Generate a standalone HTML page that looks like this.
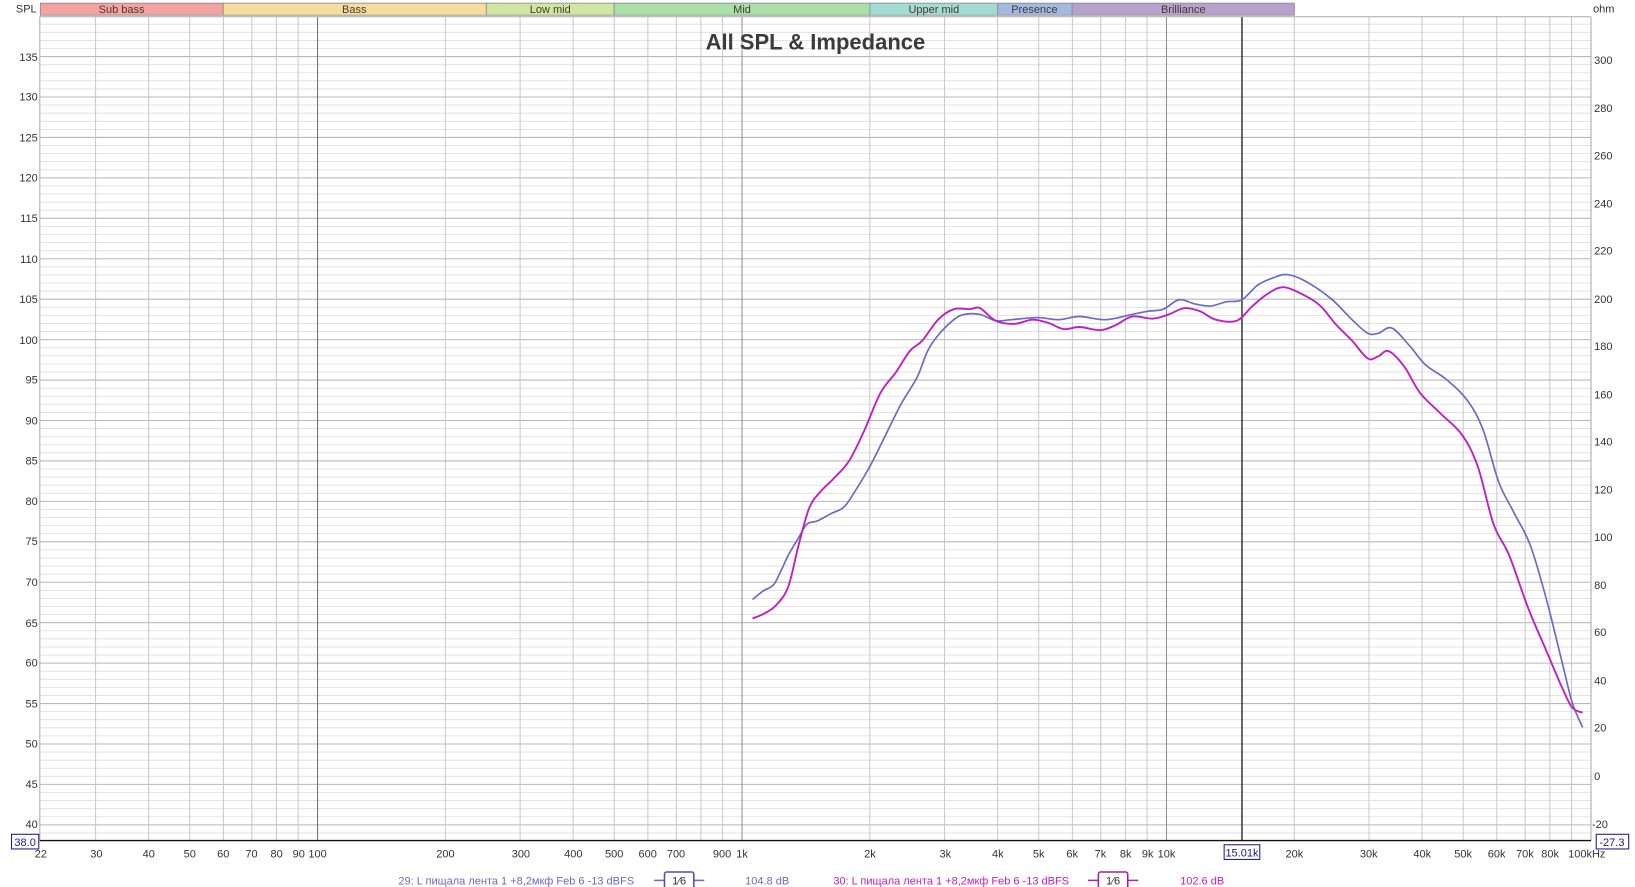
<!DOCTYPE html>
<html><head><meta charset="utf-8"><style>
html,body{margin:0;padding:0;background:#fff;overflow:hidden}
svg{display:block}
text{font-family:"Liberation Sans","DejaVu Sans",sans-serif}
</style></head><body>
<svg id="s" width="1635" height="887" viewBox="0 0 1560 846.3" preserveAspectRatio="none" xmlns="http://www.w3.org/2000/svg">
<rect width="1560" height="847" fill="#fff"/>
<g id="grid"></g>
<!-- bands -->
<g stroke="#8a8a8a" stroke-width="0.8" font-size="10.5" text-anchor="middle" fill="#444">
<rect x="38.5" y="3" width="174.5" height="11.5" fill="#f4a3a3"/>
<rect x="213" y="3" width="251" height="11.5" fill="#f6dd9e"/>
<rect x="464" y="3" width="122" height="11.5" fill="#cfe7a2"/>
<rect x="586" y="3" width="244" height="11.5" fill="#a8e0a8"/>
<rect x="830" y="3" width="122" height="11.5" fill="#a2dcd2"/>
<rect x="952" y="3" width="71" height="11.5" fill="#a3b9e2"/>
<rect x="1023" y="3" width="212" height="11.5" fill="#b6a2cc"/>
</g>
<g font-size="10.5" text-anchor="middle" fill="#4a3a30">
<text x="116" y="12.5">Sub bass</text><text x="338" y="12.5">Bass</text><text x="525" y="12.5">Low mid</text>
<text x="708" y="12.5">Mid</text><text x="891" y="12.5">Upper mid</text><text x="987" y="12.5">Presence</text><text x="1129" y="12.5">Brilliance</text>
</g>
<text x="35" y="12" font-size="10.5" text-anchor="end" fill="#333">SPL</text>
<text x="1520" y="12" font-size="10.5" fill="#333">ohm</text>
<text x="778" y="47" font-size="21" font-weight="bold" text-anchor="middle" fill="#3a3a3a">All SPL &amp; Impedance</text>
<!-- left labels -->
<g font-size="10.5" text-anchor="end" fill="#333">
<text x="36" y="58">135</text><text x="36" y="96">130</text><text x="36" y="135">125</text><text x="36" y="173">120</text>
<text x="36" y="212">115</text><text x="36" y="251">110</text><text x="36" y="289">105</text><text x="36" y="328">100</text>
<text x="36" y="366">95</text><text x="36" y="405">90</text><text x="36" y="443">85</text><text x="36" y="482">80</text>
<text x="36" y="520">75</text><text x="36" y="559">70</text><text x="36" y="598">65</text><text x="36" y="636">60</text>
<text x="36" y="675">55</text><text x="36" y="713">50</text><text x="36" y="752">45</text><text x="36" y="790">40</text>
</g>
<g font-size="10.5" fill="#333">
<text x="1521" y="61">300</text><text x="1521" y="107">280</text><text x="1521" y="152">260</text><text x="1521" y="198">240</text>
<text x="1521" y="243">220</text><text x="1521" y="289">200</text><text x="1521" y="334">180</text><text x="1521" y="380">160</text>
<text x="1521" y="425">140</text><text x="1521" y="471">120</text><text x="1521" y="516">100</text><text x="1521" y="562">80</text>
<text x="1521" y="607">60</text><text x="1521" y="653">40</text><text x="1521" y="698">20</text><text x="1521" y="744">0</text>
<text x="1519" y="790">-20</text>
</g>
<!-- freq labels -->
<g font-size="10.5" text-anchor="middle" fill="#333">
<text x="39" y="818">22</text><text x="92" y="818">30</text><text x="142" y="818">40</text><text x="181" y="818">50</text>
<text x="213" y="818">60</text><text x="240" y="818">70</text><text x="264" y="818">80</text><text x="285" y="818">90</text>
<text x="303" y="818">100</text><text x="425" y="818">200</text><text x="497" y="818">300</text><text x="547" y="818">400</text>
<text x="586" y="818">500</text><text x="618" y="818">600</text><text x="645" y="818">700</text><text x="689" y="818">900</text>
<text x="708" y="818">1k</text><text x="830" y="818">2k</text><text x="902" y="818">3k</text><text x="952" y="818">4k</text>
<text x="991" y="818">5k</text><text x="1023" y="818">6k</text><text x="1050" y="818">7k</text><text x="1074" y="818">8k</text>
<text x="1095" y="818">9k</text><text x="1113" y="818">10k</text><text x="1235" y="818">20k</text><text x="1306" y="818">30k</text>
<text x="1357" y="818">40k</text><text x="1396" y="818">50k</text><text x="1428" y="818">60k</text><text x="1455" y="818">70k</text>
<text x="1479" y="818">80k</text><text x="1514" y="818">100kHz</text>
</g>
<rect x="1168" y="806" width="34" height="14" fill="#fff" stroke="#1a1a8a"/>
<text x="1185" y="817" font-size="10.5" text-anchor="middle" fill="#1a1a8a">15.01k</text>
<rect x="11" y="796" width="26" height="14" fill="#fff" stroke="#1a1a8a"/>
<text x="24" y="807" font-size="10.5" text-anchor="middle" fill="#1a1a8a">38.0</text>
<rect x="1523" y="796" width="31" height="14" fill="#fff" stroke="#1a1a8a"/>
<text x="1538" y="807" font-size="10.5" text-anchor="middle" fill="#1a1a8a">-27.3</text>
<!-- legend -->
<g font-size="10.5">
<text x="605" y="844" text-anchor="end" fill="#6a6ac0">29: L пищала лента 1 +8,2мкф Feb 6 -13 dBFS</text>
<line x1="624" y1="840" x2="672" y2="840" stroke="#6a6ac0" stroke-width="1.5"/>
<rect x="634" y="832" width="28" height="16" rx="2" fill="#fff" stroke="#5050b0" stroke-width="1.5"/>
<text x="648" y="844" text-anchor="middle" fill="#333">1⁄6</text>
<text x="711" y="844" fill="#6a6ac0">104.8 dB</text>
<text x="1020" y="844" text-anchor="end" fill="#c020c0">30: L пищала лента 1 +8,2мкф Feb 6 -13 dBFS</text>
<line x1="1038" y1="840" x2="1086" y2="840" stroke="#b020b0" stroke-width="1.5"/>
<rect x="1048" y="832" width="28" height="16" rx="2" fill="#fff" stroke="#a020a0" stroke-width="1.5"/>
<text x="1062" y="844" text-anchor="middle" fill="#333">1⁄6</text>
<text x="1126" y="844" fill="#c020c0">102.6 dB</text>
</g>
<path id="blue" fill="none" stroke="#6a6ac8" stroke-width="1.6"/>
<path id="mag" fill="none" stroke="#c020c0" stroke-width="1.8"/>
</svg>
<script>
var NS="http://www.w3.org/2000/svg",g=document.getElementById('grid');
function ln(x1,y1,x2,y2,c,w){var l=document.createElementNS(NS,'line');l.setAttribute('x1',x1);l.setAttribute('y1',y1);l.setAttribute('x2',x2);l.setAttribute('y2',y2);l.setAttribute('stroke',c);l.setAttribute('stroke-width',w);g.appendChild(l);}
function X(f){return 708+405*(Math.log10(f)-3);}
function Y(d){return 787-(d-40)*7.716;}
var L=38,R=1518,T=16,B=802;
for(var d=39;d<=139;d++){var y=Y(d);ln(L,y,R,y,d%5==0?'#b8b8b8':'#dedede',d%5==0?1:0.8);}
[30,40,50,60,70,80,90,200,300,400,500,600,700,800,900,2000,3000,4000,5000,6000,7000,8000,9000,20000,30000,40000,50000,60000,70000,80000,90000].forEach(function(f){ln(X(f),T,X(f),B,'#c4c4c4',0.9);});
ln(X(100),T,X(100),B,'#707070',1);ln(X(1000),T,X(1000),B,'#909090',1);ln(X(10000),T,X(10000),B,'#909090',1);
ln(1185,T,1185,B,'#111',1.2);
ln(L,T,R,T,'#aaa',1);ln(L,T,L,B,'#aaa',1);ln(R,T,R,B,'#aaa',1);
ln(L,B,R,B,'#111',1.3);
function sm(pts){var p=[];for(var i=0;i<pts.length;i+=2)p.push([pts[i],pts[i+1]]);var s='M'+p[0][0]+','+p[0][1];for(var i=0;i<p.length-1;i++){var p0=p[i-1]||p[i],p1=p[i],p2=p[i+1],p3=p[i+2]||p2;s+=' C'+(p1[0]+(p2[0]-p0[0])/6)+','+(p1[1]+(p2[1]-p0[1])/6)+' '+(p2[0]-(p3[0]-p1[0])/6)+','+(p2[1]-(p3[1]-p1[1])/6)+' '+p2[0]+','+p2[1];}return s;}
document.getElementById('blue').setAttribute('d',sm([718,572,728,564,738,558,745,545,752,530,762,513,770,500,780,497,793,490,805,484,815,470,830,445,845,415,860,385,875,360,885,335,895,320,910,305,920,300,935,300,950,306,965,305,990,303,1010,305,1030,302,1055,305,1080,300,1095,297,1110,295,1125,286,1140,290,1155,292,1170,288,1185,286,1200,272,1215,265,1228,262,1245,268,1270,285,1290,305,1305,318,1315,318,1328,313,1345,330,1360,348,1380,362,1400,382,1415,410,1430,460,1445,490,1460,520,1475,570,1490,630,1500,670,1510,694]));
document.getElementById('mag').setAttribute('d',sm([718,590,728,586,740,578,752,560,762,520,772,485,782,470,795,457,810,440,825,410,840,375,855,355,868,335,880,325,895,305,910,295,925,295,935,294,950,306,968,309,985,305,1000,308,1015,314,1030,312,1050,315,1065,310,1080,302,1100,304,1115,300,1130,294,1145,297,1160,305,1180,306,1195,292,1210,280,1225,274,1245,282,1260,292,1275,310,1290,325,1305,342,1315,340,1325,335,1340,350,1355,375,1375,395,1395,415,1410,445,1425,500,1440,530,1458,580,1475,620,1490,655,1500,675,1510,680]));
</script>
</body></html>
